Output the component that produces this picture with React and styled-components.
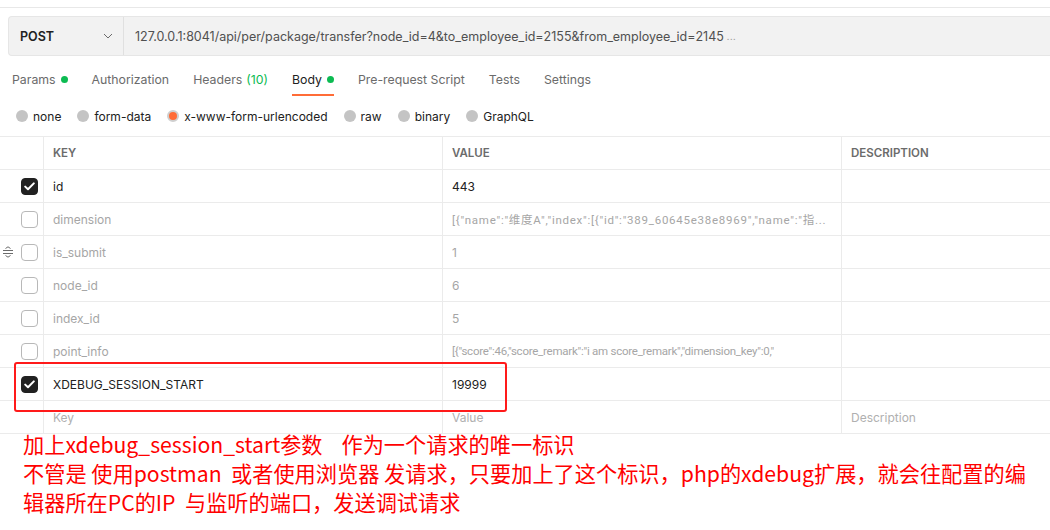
import React from "react";
import styled, { createGlobalStyle } from "styled-components";

const Global = createGlobalStyle`
  html, body { margin: 0; padding: 0; background: #fff; }
  body { font-family: Inter, "Noto Sans", sans-serif; width: 1050px; height: 530px; overflow: hidden; }
  * { box-sizing: border-box; }
`;

const Page = styled.div`
  width: 1050px;
  height: 530px;
  background: #fff;
  display: flex;
  flex-direction: column;
`;

const TopStrip = styled.div`
  height: 8px;
  border-bottom: 1px solid #e8e8e8;
`;

const UrlBar = styled.div`
  margin: 8px 0 0 8px;
  height: 40px;
  display: flex;
  background: #f2f2f2;
  border: 1px solid #e6e6e6;
  border-right: none;
  border-radius: 4px 0 0 4px;
`;

const Method = styled.div`
  width: 115px;
  display: flex;
  align-items: center;
  justify-content: space-between;
  padding: 0 10px 0 11px;
  border-right: 1px solid #e0e0e0;
  font-size: 12.5px;
  font-weight: 600;
  color: #212121;
`;

const Url = styled.div`
  flex: 1;
  display: flex;
  align-items: center;
  padding-left: 11px;
  font-size: 12.5px;
  color: #505050;
  white-space: nowrap;
  overflow: hidden;
`;

const Dots = styled.span`
  color: #a0a0a0;
  font-size: 9px;
  margin-left: 3px;
  letter-spacing: 0.5px;
`;

const Tabs = styled.div`
  display: flex;
  gap: 24px;
  padding-left: 12px;
  height: 32px;
  margin-top: 8px;
`;

const Tab = styled.div`
  display: flex;
  align-items: center;
  gap: 5px;
  font-size: 12.3px;
  color: ${(p) => (p.$active ? "#212121" : "#6b6b6b")};
  border-bottom: 2px solid ${(p) => (p.$active ? "#ff6c37" : "transparent")};
`;

const Dot = styled.span`
  width: 7px;
  height: 7px;
  border-radius: 50%;
  background: #0cbb52;
`;

const Count = styled.span`
  color: #0cbb52;
  margin-left: -1px;
`;

const Radios = styled.div`
  display: flex;
  align-items: center;
  gap: 16px;
  padding-left: 16px;
  height: 40px;
`;

const RadioItem = styled.div`
  display: flex;
  align-items: center;
  gap: 5px;
  font-size: 12px;
  color: #212121;
`;

const RadioCircle = styled.span`
  width: 12px;
  height: 12px;
  border-radius: 50%;
  background: ${(p) => (p.$on ? "#ff6c37" : "#c4c4c4")};
  border: ${(p) => (p.$on ? "2.5px solid #cfcfcf" : "none")};
`;

const TableWrap = styled.div`
  position: relative;
`;

const Table = styled.div`
  display: grid;
  grid-template-columns: 44px 399px 399px 1fr;
  border-top: 1px solid #ebebeb;
`;

const Cell = styled.div`
  height: 33px;
  min-width: 0;
  border-bottom: 1px solid #ebebeb;
  border-right: ${(p) => (p.$last ? "none" : "1px solid #ebebeb")};
  display: flex;
  align-items: center;
  padding: 0 12px 0 9px;
  white-space: nowrap;
  overflow: hidden;
  color: ${(p) =>
    p.$head ? "#6b6b6b" : p.$ph ? "#b0b0b0" : p.$on ? "#212121" : "#a6a6a6"};
  font-weight: ${(p) => (p.$head ? 600 : 400)};
  font-size: ${(p) => (p.$head ? "11.5px" : "12px")};
`;

const CellText = styled.span`
  overflow: hidden;
  white-space: nowrap;
  ${(p) =>
    p.$spacing !== undefined &&
    `
    font-family: Roboto, "Noto Sans CJK SC", sans-serif;
    font-size: 11.5px;
    letter-spacing: ${p.$spacing}px;
  `}
`;

const CheckCell = styled(Cell)`
  justify-content: flex-end;
  padding-right: 5px;
  padding-left: 0;
  gap: 6px;
`;

const Box = styled.span`
  width: 17px;
  height: 17px;
  border-radius: 4px;
  border: 1px solid ${(p) => (p.$on ? "#212121" : "#b8b8b8")};
  background: ${(p) => (p.$on ? "#212121" : "#fff")};
  display: flex;
  align-items: center;
  justify-content: center;
`;

const Highlight = styled.div`
  position: absolute;
  left: 14px;
  top: 226px;
  width: 493px;
  height: 50px;
  border: 2.5px solid #ff1a1a;
  border-radius: 3px;
  pointer-events: none;
`;

const Note = styled.div`
  padding: 0 0 0 23px;
  margin-top: -5px;
  color: #ff0000;
  font-family: "Noto Sans CJK SC", "Noto Sans", sans-serif;
  font-size: 21.2px;
  line-height: 29px;
  white-space: pre;
`;

const Check = () => (
  <svg width="11" height="9" viewBox="0 0 11 9">
    <path d="M1.2 4.6 L4 7.3 L9.8 1.4" fill="none" stroke="#fff" strokeWidth="2" strokeLinecap="round" strokeLinejoin="round" />
  </svg>
);

const Handle = () => (
  <svg width="12" height="12" viewBox="0 0 12 12" style={{ marginRight: 1 }}>
    <path d="M3.5 2.5 L6 0.8 L8.5 2.5" fill="none" stroke="#6b6b6b" strokeWidth="1" />
    <path d="M1 4.5 H11 M1 7.5 H11" stroke="#6b6b6b" strokeWidth="1" />
    <path d="M3.5 9.5 L6 11.2 L8.5 9.5" fill="none" stroke="#6b6b6b" strokeWidth="1" />
  </svg>
);

const Chevron = () => (
  <svg width="10" height="6" viewBox="0 0 10 6">
    <path d="M1 1 L5 5 L9 1" fill="none" stroke="#6b6b6b" strokeWidth="1" />
  </svg>
);

const rows = [
  { k: "id", v: "443", on: true },
  { k: "dimension", v: '[{"name":"维度A","index":[{"id":"389_60645e38e8969","name":"指...', spacing: 0.75 },
  { k: "is_submit", v: "1", handle: true },
  { k: "node_id", v: "6" },
  { k: "index_id", v: "5" },
  { k: "point_info", v: '[{"score":46,"score_remark":"i am score_remark","dimension_key":0,"', spacing: -0.25 },
  { k: "XDEBUG_SESSION_START", v: "19999", on: true },
];

export default function App() {
  return (
    <Page>
      <Global />
      <TopStrip />
      <UrlBar>
        <Method>
          POST
          <Chevron />
        </Method>
        <Url>
          127.0.0.1:8041/api/per/package/transfer?node_id=4&amp;to_employee_id=2155&amp;from_employee_id=2145
          <Dots>...</Dots>
        </Url>
      </UrlBar>
      <Tabs>
        <Tab>Params <Dot /></Tab>
        <Tab>Authorization</Tab>
        <Tab>Headers <Count>(10)</Count></Tab>
        <Tab $active>Body <Dot /></Tab>
        <Tab>Pre-request Script</Tab>
        <Tab>Tests</Tab>
        <Tab>Settings</Tab>
      </Tabs>
      <Radios>
        <RadioItem><RadioCircle />none</RadioItem>
        <RadioItem><RadioCircle />form-data</RadioItem>
        <RadioItem><RadioCircle $on />x-www-form-urlencoded</RadioItem>
        <RadioItem><RadioCircle />raw</RadioItem>
        <RadioItem><RadioCircle />binary</RadioItem>
        <RadioItem><RadioCircle />GraphQL</RadioItem>
      </Radios>
      <TableWrap>
        <Table>
          <Cell $head />
          <Cell $head>KEY</Cell>
          <Cell $head>VALUE</Cell>
          <Cell $head $last>DESCRIPTION</Cell>
          {rows.map((r) => (
            <React.Fragment key={r.k}>
              <CheckCell>
                {r.handle && <Handle />}
                <Box $on={r.on}>{r.on && <Check />}</Box>
              </CheckCell>
              <Cell $on={r.on}><CellText>{r.k}</CellText></Cell>
              <Cell $on={r.on}><CellText $spacing={r.spacing}>{r.v}</CellText></Cell>
              <Cell $last />
            </React.Fragment>
          ))}
          <Cell />
          <Cell $ph>Key</Cell>
          <Cell $ph>Value</Cell>
          <Cell $ph $last>Description</Cell>
        </Table>
        <Highlight />
      </TableWrap>
      <Note>
        {"加上xdebug_session_start参数    作为一个请求的唯一标识\n不管是 使用postman  或者使用浏览器 发请求，只要加上了这个标识，php的xdebug扩展，就会往配置的编\n辑器所在PC的IP  与监听的端口，发送调试请求"}
      </Note>
    </Page>
  );
}
